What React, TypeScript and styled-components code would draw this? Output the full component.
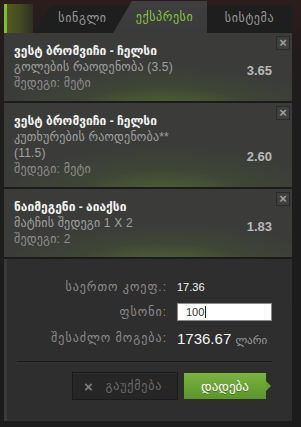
import React from "react";
import styled, { createGlobalStyle } from "styled-components";

const GlobalStyle = createGlobalStyle`
  html, body {
    margin: 0;
    padding: 0;
  }
  body {
    width: 301px;
    height: 427px;
    overflow: hidden;
    background: linear-gradient(180deg, #2c1d1d 0px, #221c1c 40px, #1d1d1d 140px, #1c1c1c 100%);
    font-family: "Liberation Sans", "DejaVu Sans", sans-serif;
  }
`;

interface IBet {
  id: number;
  match: string;
  market: React.ReactNode;
  result: string;
  odds: string;
}

const bets: IBet[] = [
  {
    id: 1,
    match: "ვესტ ბრომვიჩი - ჩელსი",
    market: "გოლების რაოდენობა (3.5)",
    result: "შედეგი: მეტი",
    odds: "3.65",
  },
  {
    id: 2,
    match: "ვესტ ბრომვიჩი - ჩელსი",
    market: (
      <>
        კუთხურების რაოდენობა**
        <br />
        (11.5)
      </>
    ),
    result: "შედეგი: მეტი",
    odds: "2.60",
  },
  {
    id: 3,
    match: "ნაიმეგენი - აიაქსი",
    market: "მატჩის შედეგი 1 X 2",
    result: "შედეგი: 2",
    odds: "1.83",
  },
];

const tabs = [
  { id: "single", label: "სინგლი", width: 99 },
  { id: "express", label: "ექსპრესი", width: 94 },
  { id: "system", label: "სისტემა", width: 85 },
];

export default function App() {
  const active = "express";

  return (
    <>
      <GlobalStyle />
      <Panel>
        <Header>
          <Lead />
          {tabs.map((t, i) => (
            <Tab key={t.id} $active={t.id === active} $slanted={i < 2} $first={i === 0} $w={t.width}>
              {t.label}
            </Tab>
          ))}
        </Header>

        {bets.map((b) => (
          <BetItem key={b.id}>
            <Info>
              <Match>{b.match}</Match>
              <Line>{b.market}</Line>
              <Line $dim>{b.result}</Line>
            </Info>
            <Odds>{b.odds}</Odds>
            <Close>×</Close>
          </BetItem>
        ))}

        <Summary>
          <SummaryGrid>
            <Label>საერთო კოეფ.:</Label>
            <Value>17.36</Value>
            <Label>ფსონი:</Label>
            <StakeBox>
              100
              <Caret />
            </StakeBox>
            <Label>შესაძლო მოგება:</Label>
            <Win>
              1736.67 <Currency>ლარი</Currency>
            </Win>
          </SummaryGrid>
          <Divider />
          <Buttons>
            <CancelButton>
              <CancelIcon>×</CancelIcon>
              გაუქმება
            </CancelButton>
            <PlaceButton>დადება</PlaceButton>
          </Buttons>
        </Summary>
      </Panel>
    </>
  );
}

const Panel = styled.div`
  margin-left: 4px;
  width: 288px;
  display: flex;
  flex-direction: column;
`;

const Header = styled.div`
  height: 33px;
  display: flex;
  align-items: flex-end;
`;

const Lead = styled.div`
  width: 26px;
  height: 29px;
  border-left: 3px solid #7cc02b;
  background: linear-gradient(90deg, #545a24 0%, #444a22 50%, #2e301f 100%);
  flex-shrink: 0;
`;

const Tab = styled.div<{ $active: boolean; $slanted: boolean; $first: boolean; $w: number }>`
  position: relative;
  flex-shrink: 0;
  width: ${(p) => p.$w}px;
  height: ${(p) => (p.$active ? 32 : 28)}px;
  margin-left: ${(p) => (p.$slanted && !p.$first ? -19 : 0)}px;
  padding-left: ${(p) => (p.$slanted && !p.$first ? 9 : 0)}px;
  box-sizing: border-box;
  display: flex;
  align-items: center;
  justify-content: center;
  padding-bottom: ${(p) => (p.$active ? 0 : 2)}px;
  background: ${(p) => (p.$active ? "linear-gradient(180deg, #3e3f3e, #393a39)" : "#1e1e1e")};
  color: ${(p) => (p.$active ? "#8dc63f" : "#9a9a9a")};
  font-size: 12px;
  letter-spacing: 0.6px;
  clip-path: ${(p) => (p.$slanted ? "polygon(19px 0, 100% 0, 100% 100%, 0 100%)" : "none")};
  z-index: ${(p) => (p.$active ? 2 : 1)};
`;

const BetItem = styled.div`
  position: relative;
  display: flex;
  justify-content: space-between;
  padding: 10px 20px 10px 10px;
  border-bottom: 2px solid #1b1b1b;
  background:
    radial-gradient(ellipse 70% 80% at 55% 115%, rgba(88, 112, 52, 0.85) 0%, rgba(70, 84, 48, 0.4) 45%, rgba(60, 61, 58, 0) 80%),
    #3b3c3a;
`;

const Info = styled.div`
  display: flex;
  flex-direction: column;
`;

const Match = styled.div`
  color: #f2f2f2;
  font-size: 12px;
  font-weight: bold;
  line-height: 16px;
`;

const Line = styled.div<{ $dim?: boolean }>`
  color: ${(p) => (p.$dim ? "#8e8e8e" : "#a0a0a0")};
  font-size: 12px;
  line-height: 16px;
  letter-spacing: 0.2px;
`;

const Odds = styled.div`
  align-self: flex-end;
  margin-bottom: 12px;
  color: #b8b8b8;
  font-size: 13px;
  font-weight: bold;
  line-height: 16px;
`;

const Close = styled.div`
  position: absolute;
  top: 3px;
  right: 2px;
  width: 14px;
  height: 14px;
  box-sizing: border-box;
  border: 1px solid #2b2b2b;
  background: #3f3f3f;
  color: #a0a0a0;
  font-size: 13px;
  font-weight: bold;
  line-height: 12px;
  text-align: center;
`;

const Summary = styled.div`
  height: 162px;
  box-sizing: border-box;
  border-left: 3px solid #3b3b3b;
  background: #2e2e2e;
  padding: 15px 20px 19px 0;
  display: flex;
  flex-direction: column;
`;

const SummaryGrid = styled.div`
  display: grid;
  grid-template-columns: 160px 1fr;
  grid-template-rows: 25px 25px 28px;
  column-gap: 10px;
  align-items: center;
`;

const Label = styled.div`
  text-align: right;
  color: #8c8c8c;
  font-size: 12px;
  letter-spacing: 1px;
`;

const Value = styled.div`
  color: #f4f4f4;
  font-size: 11px;
`;

const StakeBox = styled.div`
  width: 95px;
  height: 18px;
  box-sizing: border-box;
  border: 1px solid #8a8a8a;
  background: #ffffff;
  color: #333333;
  font-size: 11px;
  line-height: 16px;
  padding-left: 8px;
  display: flex;
  align-items: center;
`;

const Caret = styled.span`
  display: inline-block;
  width: 1px;
  height: 12px;
  background: #222;
  margin-left: 1px;
`;

const Win = styled.div`
  color: #f4f4f4;
  font-size: 15px;
`;

const Currency = styled.span`
  color: #9a9a9a;
  font-size: 11px;
`;

const Divider = styled.div`
  margin: 9px 0 0 10px;
  height: 1px;
  background: #1a1a1a;
  border-bottom: 1px solid #343434;
`;

const Buttons = styled.div`
  margin-top: 9px;
  display: flex;
  justify-content: flex-end;
  gap: 5px;
  padding-right: 5px;
`;

const CancelButton = styled.div`
  width: 106px;
  height: 28px;
  box-sizing: border-box;
  border: 1px solid #1a1a1a;
  background: #262626;
  box-shadow: inset 0 1px 0 #303030;
  color: #6c6c6c;
  font-size: 12px;
  letter-spacing: 0.8px;
  display: flex;
  align-items: center;
  justify-content: center;
  gap: 12px;
  padding-right: 4px;
`;

const CancelIcon = styled.span`
  color: #7e7e7e;
  font-size: 15px;
  font-weight: bold;
`;

const PlaceButton = styled.div`
  position: relative;
  width: 84px;
  height: 28px;
  box-sizing: border-box;
  border: 1px solid #27351b;
  background: linear-gradient(180deg, #7bb443 0%, #6aa436 50%, #5c962c 100%);
  color: #ffffff;
  font-size: 13px;
  text-shadow: 0 1px 0 rgba(0, 0, 0, 0.35);
  display: flex;
  align-items: center;
  justify-content: center;

  &::before {
    content: "";
    position: absolute;
    right: -7px;
    top: 7px;
    border-style: solid;
    border-width: 6px 0 6px 6px;
    border-color: transparent transparent transparent #27351b;
  }
  &::after {
    content: "";
    position: absolute;
    right: -5px;
    top: 8px;
    border-style: solid;
    border-width: 5px 0 5px 5px;
    border-color: transparent transparent transparent #62a030;
  }
`;
